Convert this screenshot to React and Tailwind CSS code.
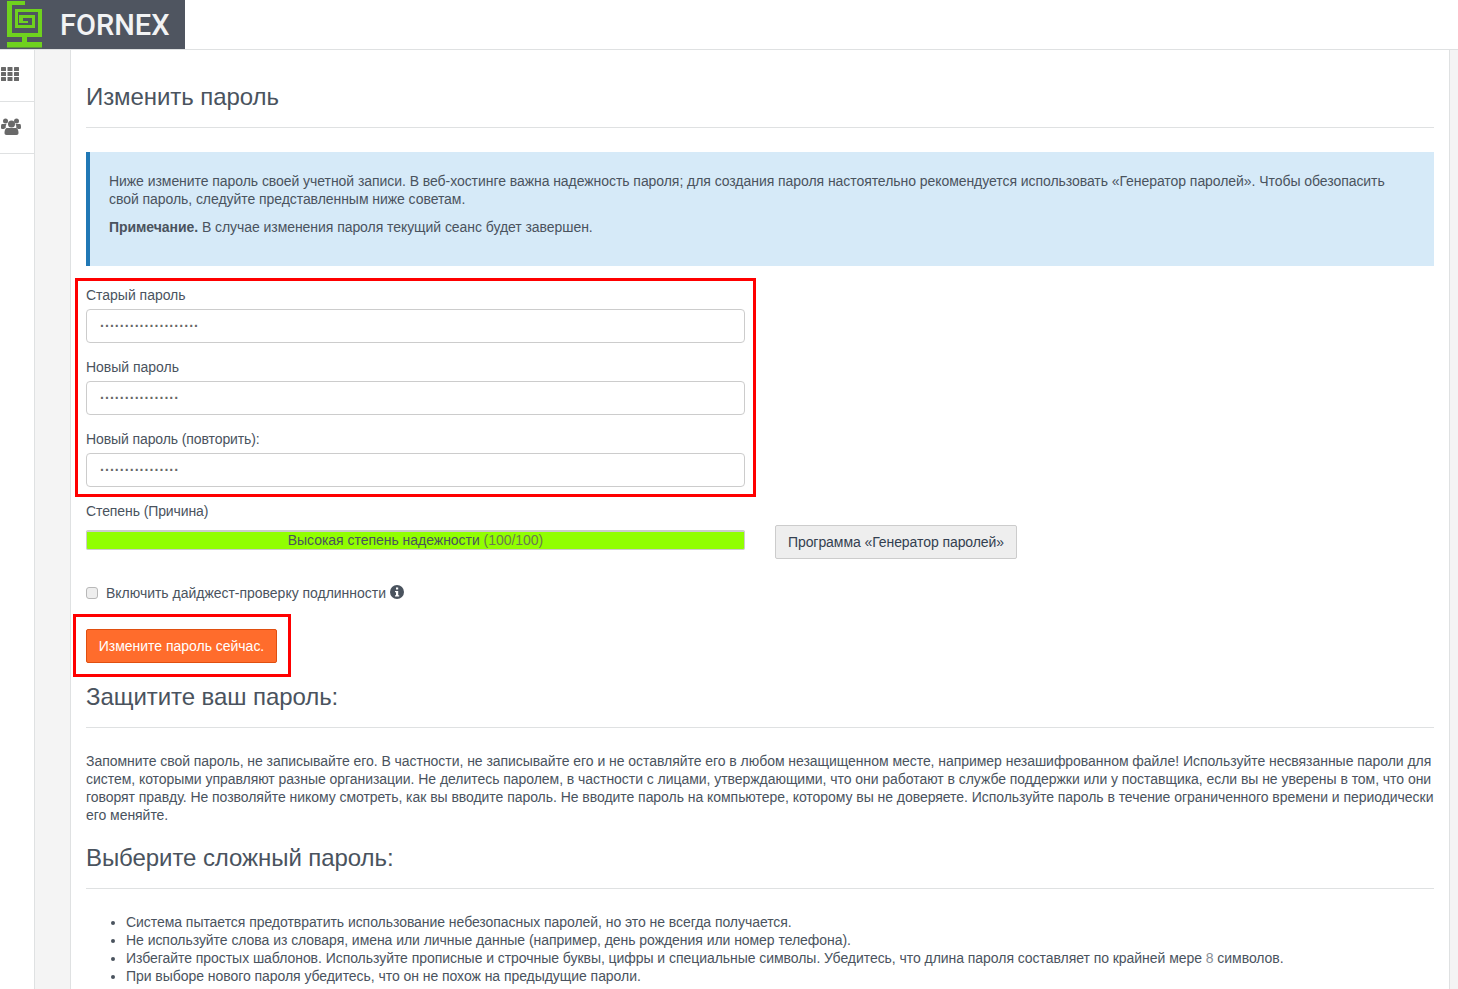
import React from "react";

const FONT = "font-['Liberation_Sans',Arial,sans-serif]";

function Logo() {
  return (
    <div className="w-[185px] h-[49px] bg-[#4f5560] flex items-start shrink-0">
      <svg width="50" height="49" viewBox="0 0 50 49" className="shrink-0">
        <path
          fill="#6fd21e"
          d="M7 1h18v4H12v28h26V12H18v13h14V18H23v3h5v2h-9v-8h16v13H15V9h27v28H7z"
        />
        <path fill="#6fd21e" d="M22 37h5v5h-5zM7 42h35v5.500H7z" />
      </svg>
      <span className="text-[#f2f3f4] text-[29px] leading-[50px] font-medium ml-[10px] font-['Roboto',sans-serif]">
        FORNEX
      </span>
    </div>
  );
}

function GridIcon() {
  return (
    <svg width="18" height="14" viewBox="0 0 18 14" fill="#696969">
      {[0, 5, 10].map((y) =>
        [0, 6.5, 13].map((x) => <rect key={`${x}-${y}`} x={x} y={y} width="5" height="4" rx="0.500" />)
      )}
    </svg>
  );
}

function UsersIcon() {
  return (
    <svg width="20" height="18" viewBox="0 0 20 18" fill="#696969">
      <circle cx="4.500" cy="3" r="2.500" />
      <circle cx="15.500" cy="3" r="2.500" />
      <path d="M1 6h4.500c-.8 1.200-1 2.500-.6 3.500-.9.500-1.400 1-1.700 1.500H1.200C.4 11 0 10.400 0 9.500 0 7.500.2 6 1 6zM19 6h-4.500c.8 1.200 1 2.500.6 3.500.9.500 1.400 1 1.700 1.500h2c.8 0 1.200-.6 1.200-1.500 0-2-.2-3.500-1-3.500z" />
      <circle cx="10.500" cy="6" r="3.500" />
      <path d="M6 10h9c1.500 0 2.500 2 2.500 5 0 1.300-.7 2-2 2H5.500c-1.300 0-2-.7-2-2 0-3 1-5 2.500-5z" />
    </svg>
  );
}

function Field({ label, dots, className = "" }) {
  return (
    <div className={className}>
      <label className="block h-[18px] leading-[18px] mb-[5px] tracking-[-0.02px]">{label}</label>
      <div className="h-[34px] border border-[#cccccc] rounded-[4px] bg-white pl-[13px] flex items-center text-[#666] text-[14px] font-bold tracking-[0.29px]">
        <span className="leading-none">{"·".repeat(dots)}</span>
      </div>
    </div>
  );
}

function Heading({ children, className = "" }) {
  return (
    <h2 className={`text-[24px] leading-[26px] text-[#4a535e] tracking-[-0.07px] border-b border-[#dfe1e2] ${className}`}>
      {children}
    </h2>
  );
}

export default function App() {
  return (
    <div className={`${FONT} h-[989px] overflow-hidden bg-white text-[14px] leading-[18px] text-[#4a535e]`}>
      <header className="h-[50px] border-b border-[#dfe1e2] flex bg-white">
        <Logo />
      </header>
      <div className="flex h-[939px]">
        <aside className="w-[35px] border-r border-[#dfe1e2] shrink-0">
          <div className="h-[52px] border-b border-[#dfe1e2] pl-px pt-[17px]">
            <GridIcon />
          </div>
          <div className="h-[52px] border-b border-[#dfe1e2] pl-px pt-[16px]">
            <UsersIcon />
          </div>
        </aside>
        <div className="w-[36px] bg-[#f4f4f4] border-r border-[#dfe1e2] shrink-0" />
        <main className="w-[1379px] border-r border-[#dfe1e2] pl-[15px] pr-[15px] shrink-0">
          <Heading className="mt-[34px] h-[44px]">Изменить пароль</Heading>

          <div className="mt-[24px] h-[114px] bg-[#d6eaf8] border-l-[4px] border-[#2178b5] pl-[19px] pr-[40px] pt-[20px] tracking-[-0.057px]">
            <p>
              Ниже измените пароль своей учетной записи. В веб-хостинге важна надежность пароля; для создания пароля настоятельно рекомендуется использовать «Генератор паролей». Чтобы обезопасить свой пароль, следуйте представленным ниже советам.
            </p>
            <p className="mt-[10px]">
              <strong>Примечание.</strong> В случае изменения пароля текущий сеанс будет завершен.
            </p>
          </div>

          <div className="mt-[12px] -ml-[11px] w-[681px] h-[219px] border-[3px] border-[#ff0000] pl-[8px] pr-[8px] pt-[5px]">
            <Field label="Старый пароль" dots={20} />
            <Field label="Новый пароль" dots={16} className="mt-[15px]" />
            <Field label={<span className="tracking-[-0.1px]">Новый пароль (повторить):</span>} dots={16} className="mt-[15px]" />
          </div>

          <label className="block mt-[5px] h-[18px] tracking-[-0.1px]">Степень (Причина)</label>
          <div className="flex items-start mt-[10px] h-[34px]">
            <div className="w-[659px] h-[20px] bg-[#91ff00] border border-[#cccccc] border-t-2 rounded-[2px] text-center leading-[17px] tracking-[-0.03px]">
              Высокая степень надежности <span className="text-[#6b7a50]">(100/100)</span>
            </div>
            <button className="ml-[30px] -mt-[5px] h-[34px] w-[242px] bg-[#eeeeee] border border-[#cccccc] rounded-[2px] text-[#333f50] tracking-[-0.07px]">
              Программа «Генератор паролей»
            </button>
          </div>

          <div className="mt-[19px] h-[20px] flex items-center tracking-[-0.02px]">
            <span className="w-[12px] h-[12px] border border-[#b8b8b8] bg-[#eeeeee] rounded-[3px]" />
            <span className="ml-[8px]">Включить дайджест-проверку подлинности</span>
            <svg width="14" height="14" viewBox="0 0 14 14" className="ml-[4px] -mt-[2px]">
              <circle cx="7" cy="7" r="7" fill="#4a535e" />
              <rect x="6" y="2.500" width="2.200" height="2" fill="#fff" />
              <path d="M5 6h3.200v4.200H9.200v1.300H5v-1.300h1V7.300H5z" fill="#fff" />
            </svg>
          </div>

          <div className="mt-[11px] -ml-[13px] w-[218px] h-[63px] border-[3px] border-[#ff0000] pl-[10px] pt-[12px]">
            <button className="w-[191px] h-[34px] bg-[#ff6c2c] border border-[#e04f10] rounded-[2px] text-white tracking-[-0.02px]">
              Измените пароль сейчас.
            </button>
          </div>

          <Heading className="mt-[7px] h-[44px]">Защитите ваш пароль:</Heading>

          <p className="mt-[24px] tracking-[-0.045px]">
            Запомните свой пароль, не записывайте его. В частности, не записывайте его и не оставляйте его в любом незащищенном месте, например незашифрованном файле! Используйте несвязанные пароли для систем, которыми управляют разные организации. Не делитесь паролем, в частности с лицами, утверждающими, что они работают в службе поддержки или у поставщика, если вы не уверены в том, что они говорят правду. Не позволяйте никому смотреть, как вы вводите пароль. Не вводите пароль на компьютере, которому вы не доверяете. Используйте пароль в течение ограниченного времени и периодически его меняйте.
          </p>

          <Heading className="mt-[21px] h-[44px]">Выберите сложный пароль:</Heading>

          <ul className="mt-[24px] pl-[40px] list-disc tracking-[-0.05px]">
            <li>Система пытается предотвратить использование небезопасных паролей, но это не всегда получается.</li>
            <li>Не используйте слова из словаря, имена или личные данные (например, день рождения или номер телефона).</li>
            <li>Избегайте простых шаблонов. Используйте прописные и строчные буквы, цифры и специальные символы. Убедитесь, что длина пароля составляет по крайней мере <span className="text-[#8a9098]">8</span> символов.</li>
            <li>При выборе нового пароля убедитесь, что он не похож на предыдущие пароли.</li>
          </ul>
        </main>
        <div className="flex-1 bg-[#f4f4f4]" />
      </div>
    </div>
  );
}
